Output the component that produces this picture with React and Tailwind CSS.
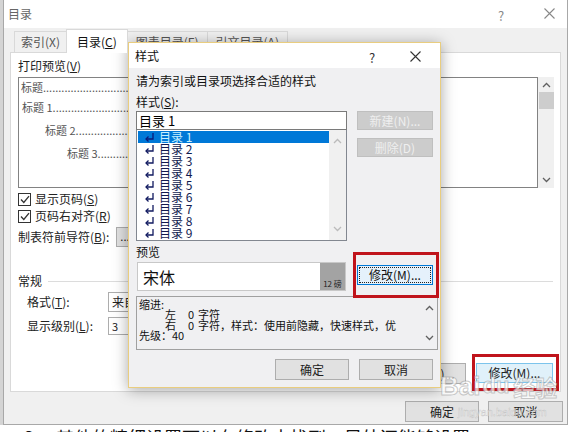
import React from "react";

const F = { fontFamily: '"Noto Sans CJK SC", "Liberation Sans", sans-serif' };

function ChevUp({ c = "#606060" }) {
  return (
    <svg width="9" height="6" viewBox="0 0 9 6"><path d="M1 5 L4.5 1.5 L8 5" fill="none" stroke={c} strokeWidth="1.3" /></svg>
  );
}
function ChevDown({ c = "#606060" }) {
  return (
    <svg width="9" height="6" viewBox="0 0 9 6"><path d="M1 1 L4.5 4.5 L8 1" fill="none" stroke={c} strokeWidth="1.3" /></svg>
  );
}
function RetArrow({ c }) {
  return (
    <svg width="11" height="10" viewBox="0 0 11 10" className="shrink-0">
      <path d="M9 1 V7 H2" fill="none" stroke={c} strokeWidth="1.3" />
      <path d="M4.5 4.5 L2 7 L4.5 9.5" fill="none" stroke={c} strokeWidth="1.3" />
    </svg>
  );
}
function Check() {
  return (
    <div className="w-[13px] h-[13px] border border-[#333] bg-white flex items-center justify-center">
      <svg width="10" height="9" viewBox="0 0 10 9"><path d="M1 4.5 L3.8 7.5 L9 1.2" fill="none" stroke="#333" strokeWidth="1.3" /></svg>
    </div>
  );
}

function Btn({ children, className = "" }) {
  return (
    <div className={"h-[21px] w-[74px] border border-[#adadad] bg-[#e1e1e1] flex items-center justify-center text-[12px] text-[#222] " + className}>
      {children}
    </div>
  );
}

function StyleDialog() {
  const rows = [1, 2, 3, 4, 5, 6, 7, 8, 9];
  return (
    <div className="absolute left-[128px] top-[42px] w-[313px] h-[346px] border border-[#e9cd7f] bg-[#f0f0f2] shadow-[0_2px_14px_rgba(0,0,0,0.35)] flex flex-col">
      <div className="h-[25px] bg-white flex items-center pl-[6px] relative text-[12px] text-[#111]">
        <span>样式</span>
        <span className="absolute left-[240px] top-[5px] text-[13px] text-[#333]">?</span>
        <svg className="absolute right-[19px] top-[8px]" width="11" height="11" viewBox="0 0 11 11"><path d="M0.5 0.5 L10.5 10.5 M10.5 0.5 L0.5 10.5" stroke="#333" strokeWidth="1.1" /></svg>
      </div>
      <div className="flex flex-col pl-[7px] pr-[7px] text-[12px] text-[#111]">
        <div className="mt-[6px] leading-[14px]">请为索引或目录项选择合适的样式</div>
        <div className="mt-[7px] leading-[14px]">样式(<span className="underline">S</span>):</div>
        <div className="flex mt-[2px]">
          <div className="w-[211px] flex flex-col">
            <div className="h-[19px] border border-[#7a7a7a] bg-white flex items-center pl-[2px] text-[13px] leading-[13px] text-[#000]">目录 1</div>
            <div className="h-[111px] border border-[#828790] border-t-0 bg-white flex">
              <div className="flex-1 flex flex-col pt-[1px] pl-[1px]">
                {rows.map((n) => (
                  <div key={n} className={"h-[12px] flex items-center pl-[6px] " + (n === 1 ? "bg-[#0078d7]" : "")}>
                    <RetArrow c={n === 1 ? "#0a1a7a" : "#111a60"} />
                    <span className={"ml-[4px] text-[12px] leading-[12px] " + (n === 1 ? "text-[#c8f0ff]" : "text-[#111a50]")}>目录&nbsp;{n}</span>
                  </div>
                ))}
              </div>
              <div className="w-[17px] bg-[#f0f0f0] flex flex-col items-center justify-between py-[8px]">
                <ChevUp c="#bbb" />
                <ChevDown c="#bbb" />
              </div>
            </div>
          </div>
          <div className="ml-[10px] w-[76px] flex flex-col">
            <div className="h-[19px] bg-[#cccccc] border border-[#bfbfbf] flex items-center justify-center text-[12px] text-[#efefef]">新建(N)...</div>
            <div className="h-[19px] mt-[8px] bg-[#cccccc] border border-[#bfbfbf] flex items-center justify-center text-[12px] text-[#efefef]">删除(D)</div>
          </div>
        </div>
        <div className="mt-[4px] leading-[14px]">预览</div>
        <div className="flex mt-[3px]">
          <div className="ml-[1px] w-[209px] h-[29px] bg-white border border-[#c8c8c8] flex">
            <div className="flex-1 flex items-center pl-[5px] text-[16px] text-[#111]">宋体</div>
            <div className="w-[25px] bg-[#a3a3a3] flex items-end justify-center pb-[2px] text-[8px] leading-[9px] text-[#222]">12 磅</div>
          </div>
          <div className="ml-[11px] mt-[3px] w-[76px] h-[20px] border border-[#0078d7] bg-[#e5f1fb] p-[1px]">
            <div className="w-full h-full border border-dotted border-[#222] flex items-center justify-center text-[12px] text-[#111]">修改(M)...</div>
          </div>
        </div>
        <div className="mt-[5px] w-[302px] h-[54px] border border-[#a0a0a0] bg-[#f0f0f2] flex">
          <div className="flex-1 pl-[2px] pt-[2px] text-[11px] leading-[10.4px] text-[#111] whitespace-nowrap">
            <div>缩进:</div>
            <div className="flex pl-[26px]"><span className="w-[23px]">左</span><span className="w-[10px]">0</span><span>字符</span></div>
            <div className="flex pl-[26px]"><span className="w-[23px]">右</span><span className="w-[10px]">0</span><span>字符，样式：使用前隐藏，快速样式，优</span></div>
            <div>先级：40</div>
          </div>
          <div className="w-[16px] flex flex-col items-center justify-between py-[8px]">
            <ChevUp />
            <ChevDown />
          </div>
        </div>
        <div className="flex justify-end gap-[10px] mt-[9px]">
          <Btn>确定</Btn>
          <Btn>取消</Btn>
        </div>
      </div>
    </div>
  );
}

export default function App() {
  const dots = "......................................";
  return (
    <div style={F} className="relative w-[572px] h-[432px] overflow-hidden bg-white">
      <div className="flex h-[425px]">
        <div className="w-[3px] bg-[#d4d4d4]" />
        <div className="w-[565px] h-[425px] bg-[#f0f0f0] border-x border-b border-[#a8a8a8] flex flex-col">
          <div className="h-[28px] bg-white flex items-center pl-[4px] relative text-[12px] text-[#666]">
            <span>目录</span>
            <span className="absolute left-[494px] top-[6px] text-[13px] text-[#888]">?</span>
            <svg className="absolute right-[12px] top-[8px]" width="11" height="11" viewBox="0 0 11 11"><path d="M0.5 0.5 L10.5 10.5 M10.5 0.5 L0.5 10.5" stroke="#888" strokeWidth="1.1" /></svg>
          </div>
          <div className="h-[24px] flex items-end pl-[10px] text-[12px]">
            <div className="h-[21px] px-[6px] flex items-center text-[#555] border-t border-l border-[#d9d9d9]">索引(X)</div>
            <div className="h-[24px] px-[10px] flex items-center text-[#111] bg-white border-x border-t border-[#d9d9d9] -mb-[1px] relative z-10">目录(<span className="underline">C</span>)</div>
            <div className="h-[21px] px-[8px] flex items-center text-[#555] border-t border-r border-[#d9d9d9]">图表目录(F)</div>
            <div className="h-[21px] px-[8px] flex items-center text-[#555] border-t border-r border-[#d9d9d9]">引文目录(A)</div>
          </div>
          <div className="ml-[6px] w-[551px] h-[340px] bg-white border border-[#d9d9d9] flex flex-col pl-[7px] text-[12px] text-[#222]">
            <div className="mt-[6px] leading-[14px]">打印预览(<span className="underline">V</span>)</div>
            <div className="mt-[4px] flex h-[111px] w-[536px]">
              <div className="flex-1 border border-[#828282] bg-white text-[11px] text-[#555] overflow-hidden whitespace-nowrap">
                <div className="pl-[2px] pt-[2px] leading-[14px]">标题{dots}</div>
                <div className="pl-[3px] mt-[6px] leading-[14px]">标题 1{dots}</div>
                <div className="pl-[26px] mt-[9px] leading-[14px]">标题 2{dots}</div>
                <div className="pl-[48px] mt-[9px] leading-[14px]">标题 3{dots}</div>
              </div>
              <div className="w-[16px] bg-[#f0f0f0] flex flex-col items-center pt-[5px]">
                <ChevUp />
                <div className="mt-[4px] w-[15px] h-[17px] bg-[#cdcdcd]" />
                <div className="flex-1" />
                <div className="pb-[5px]"><ChevDown /></div>
              </div>
            </div>
            <div className="mt-[4px] h-[14px] flex items-center gap-[4px]"><Check /><span>显示页码(<span className="underline">S</span>)</span></div>
            <div className="mt-[3px] h-[14px] flex items-center gap-[4px]"><Check /><span>页码右对齐(<span className="underline">R</span>)</span></div>
            <div className="mt-[4px] h-[20px] flex items-center">
              <span>制表符前导符(<span className="underline">B</span>):</span>
              <div className="ml-[7px] w-[60px] h-[20px] border border-[#adadad] bg-[#e1e1e1] text-[11px] pl-[3px]">.......</div>
            </div>
            <div className="mt-[27px] h-[14px] flex items-center">
              <span>常规</span>
              <div className="ml-[6px] flex-1 mr-[7px] h-px bg-[#dcdcdc]" />
            </div>
            <div className="mt-[4px] h-[20px] flex items-center pl-[9px]">
              <span className="w-[81px]">格式(<span className="underline">T</span>):</span>
              <div className="w-[90px] h-[20px] border border-[#adadad] bg-white flex items-center pl-[3px]">来自模板</div>
            </div>
            <div className="mt-[5px] h-[18px] flex items-center pl-[9px]">
              <span className="w-[81px]">显示级别(<span className="underline">L</span>):</span>
              <div className="w-[60px] h-[18px] border border-[#adadad] bg-white flex items-center pl-[3px] text-[11px]">3</div>
            </div>
            <div className="mt-[28px] flex justify-end pr-[7px] gap-[10px]">
              <Btn className="h-[20px] w-[74px]">选项(O)...</Btn>
              <div className="h-[20px] w-[77px] border border-[#7cc4ec] bg-[#e0f1fa] flex items-center justify-center text-[12px] text-[#222]">修改(M)...</div>
            </div>
          </div>
          <div className="flex justify-end gap-[9px] mt-[9px] pr-[4px]">
            <Btn className="h-[20px]">确定</Btn>
            <Btn className="h-[20px] w-[75px]">取消</Btn>
          </div>
        </div>
        <div className="w-[4px] bg-white" />
      </div>
      <div className="h-[7px] overflow-hidden pl-[24px] text-[18px] leading-[24px] text-[#111] whitespace-nowrap">
        3、 其他的精细设置可以在修改中找到，另外还能够设置
      </div>

      <StyleDialog />

      <div className="absolute left-[353px] top-[252px] w-[86px] h-[46px] border-[3px] border-[#c0141c]" />
      <div className="absolute left-[472px] top-[354px] w-[87px] h-[37px] border-[3px] border-[#c0141c]" />

      <div className="absolute left-[440px] top-[372px] flex items-center text-[26px] leading-[28px] font-bold text-[rgba(255,255,255,0.7)] [-webkit-text-stroke:1px_rgba(150,150,150,0.5)]" style={{ fontFamily: '"Liberation Sans", sans-serif' }}>
        <span>Bai</span>
        <span className="ml-[2px] text-[22px]">du</span>
        <span className="ml-[4px] text-[22px]" style={F}>经验</span>
      </div>
      <div className="absolute left-[458px] top-[404px] text-[11px] text-[rgba(255,255,255,0.75)] [-webkit-text-stroke:0.5px_rgba(150,150,150,0.45)]" style={{ fontFamily: '"Liberation Sans", sans-serif' }}>jingyan.baidu.com</div>
    </div>
  );
}
